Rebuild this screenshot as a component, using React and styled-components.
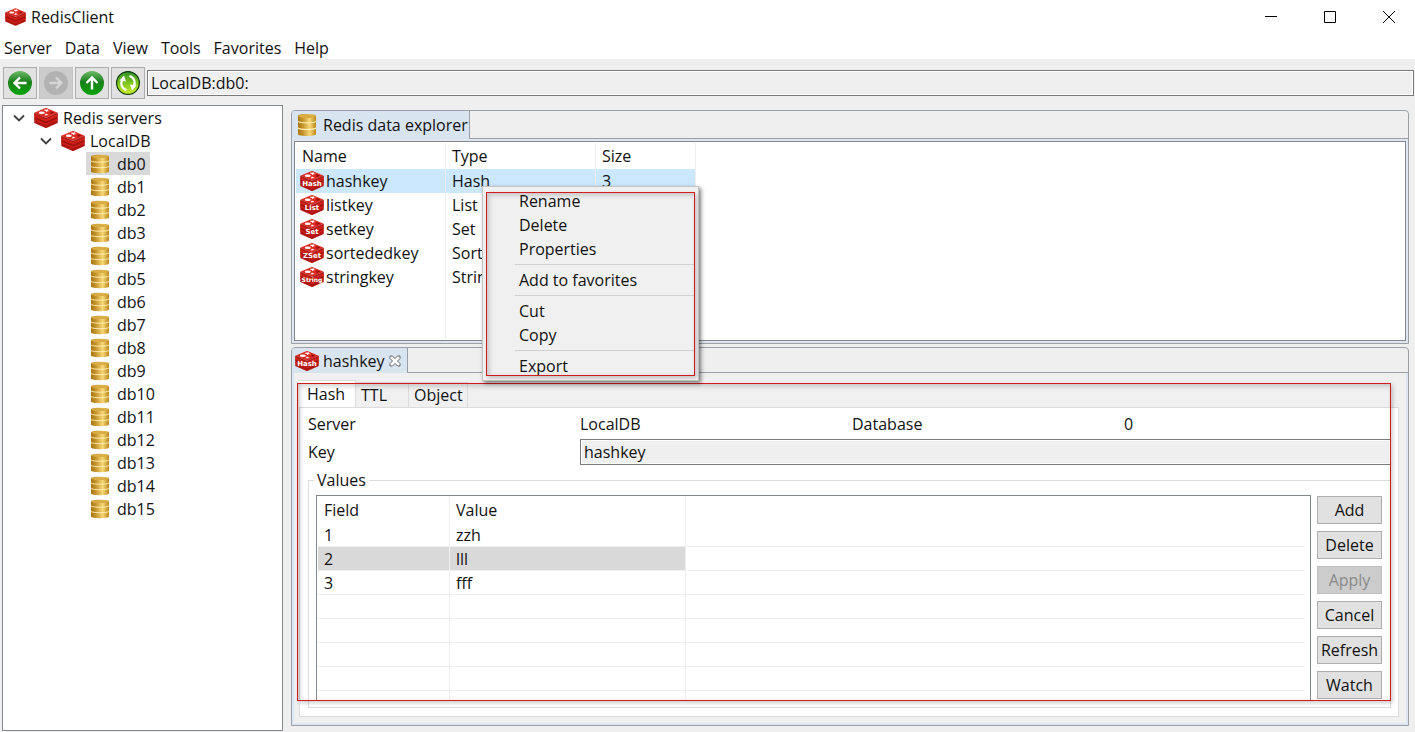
import React from "react";
import styled, { createGlobalStyle, css } from "styled-components";

const GlobalStyle = createGlobalStyle`
  * {
    box-sizing: border-box;
  }
  body {
    margin: 0;
    background-color: #efefef;
    color: #111;
    font-family: "Open Sans", "Noto Sans", sans-serif;
    font-size: 16px;
    line-height: 20px;
  }
  button, input {
    font: inherit;
    color: inherit;
  }
`;

const WINDOW = styled.div`
  display: flex;
  flex-direction: column;
  height: 100vh;
  overflow: hidden;
`;
const TITLE_BAR = styled.header`
  display: flex;
  align-items: center;
  justify-content: space-between;
  height: 36px;
  padding: 0 0 2px 5px;
  background-color: #fff;
`;
const TITLE_GROUP = styled.div`
  display: flex;
  align-items: center;
  gap: 5px;
`;
const WINDOW_BUTTON_GROUP = styled.div`
  display: flex;
`;
const WINDOW_BUTTON = styled.button`
  display: flex;
  align-items: center;
  justify-content: flex-end;
  width: 59px;
  height: 34px;
  padding: 0 20px 0 0;
  border: none;
  background: none;
`;
const MENU_BAR = styled.nav`
  display: flex;
  gap: 13px;
  height: 23px;
  padding: 2px 4px 0;
  background-color: #fff;
`;
const MENU_BAR_ITEM = styled.a`
  color: inherit;
  text-decoration: none;
`;
const TOOL_BAR = styled.div`
  display: flex;
  align-items: center;
  gap: 2px;
  padding: 8px 1px 6px 3px;
`;
const TOOL_BUTTON = styled.button`
  display: flex;
  align-items: center;
  justify-content: center;
  flex: none;
  width: 34px;
  height: 32px;
  padding: 0;
  border: 1px solid ${(props) => (props.disabled ? "#c4c4c4" : "#adadad")};
  background-color: ${(props) => (props.disabled ? "#ccc" : "#e1e1e1")};
`;
const READONLY_INPUT = styled.input`
  flex: 1;
  min-width: 0;
  width: 100%;
  height: 26px;
  padding: 0 3px;
  border: 1px solid #7a7a7a;
  background-color: #efefef;
  box-shadow: inset 0 0 0 1px #fff;
  outline: none;
`;

const BODY = styled.main`
  display: flex;
  flex: 1;
  gap: 8px;
  min-height: 0;
  padding: 0 6px 1px 2px;
`;
const TREE = styled.ul`
  flex: none;
  width: 20%;
  max-width: 281px;
  margin: 0;
  padding: 0 0 0 2px;
  list-style: none;
  overflow: hidden;
  border: 1px solid #828790;
  background-color: #fff;
`;
const TREE_ROW = styled.li`
  display: flex;
  align-items: center;
  height: 23px;
  padding-left: ${(props) => props.$level * 27}px;
`;
const TREE_ARROW = styled.span`
  display: flex;
  align-items: center;
  width: 29px;
  padding-left: 8px;
`;
const TREE_LABEL = styled.span`
  display: flex;
  align-items: center;
  gap: ${(props) => (props.$leaf ? 7 : 5)}px;
  height: 23px;
  padding: ${(props) => (props.$leaf ? "0 4px" : "0")};
  background-color: ${(props) => (props.$selected ? "#d9d9d9" : "transparent")};
`;

const WORKSPACE = styled.div`
  position: relative;
  display: flex;
  flex-direction: column;
  flex: 1;
  gap: 3px;
  min-width: 0;
  padding: 5px 0;
`;
const PANEL = styled.section`
  display: flex;
  flex-direction: column;
  flex: ${(props) => (props.$grow ? "1" : "0 0 234px")};
  min-height: 0;
  border: 1px solid #9a9fa8;
  border-radius: 4px 4px 0 0;
`;
const PANEL_STRIP = styled.div`
  display: flex;
  flex: none;
  height: ${(props) => props.$height}px;
`;
const PANEL_TAB = styled.h2`
  display: flex;
  align-items: center;
  gap: 4px;
  margin: 0;
  padding: 0 1px 0 3px;
  border-right: 1px solid #9a9fa8;
  border-top-left-radius: 3px;
  background-color: #d9e4f1;
  font-size: 16px;
  font-weight: 400;
`;
const PANEL_TAB_ICON = styled.span`
  display: flex;
  justify-content: center;
  width: 24px;
`;
const PANEL_STRIP_REST = styled.div`
  flex: 1;
  border-bottom: 1px solid #9a9fa8;
`;
const CLOSE_BUTTON = styled.button`
  display: flex;
  padding: 0 5px 0 0;
  border: none;
  background: none;
`;
const EXPLORER_FRAME = styled.div`
  flex: 1;
  padding: 2px;
  background-color: #dfe6f0;
`;
const EXPLORER_LIST = styled.div`
  height: 100%;
  padding: 1px;
  border: 1px solid #828790;
  background-color: #fff;
`;

const tableBase = css`
  table-layout: fixed;
  border-collapse: separate;
  border-spacing: 0;
`;
const cellBase = css`
  padding: 0 0 0 6px;
  text-align: left;
  font-weight: 400;
`;
const KEY_TABLE = styled.table`
  ${tableBase}
  width: 400px;
  height: 196px;
  th,
  td {
    ${cellBase}
    border-right: 1px solid #ededed;
  }
  th {
    height: 26px;
  }
`;
const KEY_ROW = styled.tr`
  height: 24px;
  background-color: ${(props) => (props.$selected ? "#cce8ff" : "#fff")};
`;
const KEY_NAME = styled.div`
  display: flex;
  align-items: center;
  gap: 2px;
  margin-left: -2px;
`;

const EDITOR_FRAME = styled.div`
  position: relative;
  display: flex;
  flex-direction: column;
  flex: 1;
  min-height: 0;
  padding: 7px 7px 6px 5px;
  border: 2px solid #dce5f1;
  border-width: 0 2px 2px;
  background-color: #f0f0f0;
`;
const FOLDER_TABS = styled.div`
  display: flex;
  align-items: flex-end;
  flex: none;
  height: 27px;
`;
const FOLDER_TAB = styled.button`
  width: ${(props) => props.$width}px;
  height: ${(props) => (props.$active ? 27 : 25)}px;
  padding: ${(props) => (props.$active ? "0 8px 1px" : "0 5px")};
  text-align: left;
  border: 1px solid #dcdcdc;
  border-width: 1px 1px 0 0;
  background-color: ${(props) => (props.$active ? "#fff" : "#f0f0f0")};
`;
const FOLDER_PAGE = styled.div`
  display: flex;
  flex-direction: column;
  flex: 1;
  min-height: 0;
  padding: 3px 7px 8px 8px;
  border: 1px solid #dcdcdc;
  background-color: #fff;
`;
const INFO_GRID = styled.div`
  display: grid;
  grid-template-columns: repeat(4, 1fr);
  column-gap: 5px;
  row-gap: 2px;
  grid-auto-rows: 26px;
  align-items: center;
`;
const KEY_FIELD = styled.div`
  display: flex;
  grid-column: span 3;
`;
const VALUES_GROUP = styled.fieldset`
  display: flex;
  flex: 1;
  gap: 6px;
  min-width: 0;
  min-height: 0;
  margin: 5px 0 0;
  padding: 5px 8px 6px 7px;
  border: 1px solid #dcdcdc;
  legend {
    margin-left: -2px;
    padding: 0 3px;
  }
`;
const VALUES_LIST = styled.div`
  flex: 1;
  min-width: 0;
  overflow: hidden;
  padding: 1px 5px 0 1px;
  border: 1px solid #828790;
  background-color: #fff;
`;
const VALUES_TABLE = styled.table`
  ${tableBase}
  width: 100%;
  th,
  td {
    ${cellBase}
    height: 24px;
    border: 1px solid #efefef;
    border-width: 0 1px 1px 0;
  }
  th {
    height: 26px;
    border-bottom: none;
  }
  th:last-child,
  td:last-child {
    border-right: none;
  }
`;
const VALUE_ROW = styled.tr`
  td:not(:last-child) {
    background-color: ${(props) => (props.$selected ? "#d9d9d9" : "#fff")};
  }
`;
const ACTION_GROUP = styled.div`
  display: flex;
  flex-direction: column;
  gap: 7px;
  flex: none;
  width: 65px;
  padding-top: 1px;
`;
const ACTION_BUTTON = styled.button`
  flex: none;
  height: 28px;
  padding: 0;
  border: 1px solid #adadad;
  background-color: #e1e1e1;
  &:disabled {
    border-color: #bfbfbf;
    background-color: #ccc;
    color: #8a8a8a;
  }
`;

const MARK = styled.div`
  position: absolute;
  inset: ${(props) => props.$inset};
  border: 1px solid #d01c1c;
  box-shadow: 2px 2px 4px rgba(0, 0, 0, 0.2),
    inset 2px 2px 5px rgba(0, 0, 0, 0.2);
  pointer-events: none;
`;
const CONTEXT_MENU = styled.ul`
  position: absolute;
  top: 81px;
  left: 191px;
  width: 217px;
  margin: 0;
  padding: 2px 4px 2px 32px;
  list-style: none;
  border: 1px solid #c4c4c4;
  background-color: #f0f0f0;
  box-shadow: 2px 2px 4px rgba(0, 0, 0, 0.5);
`;
const CONTEXT_MENU_ITEM = styled.li`
  display: flex;
  button {
    flex: 1;
    height: 24px;
    padding: 0 4px;
    text-align: left;
    border: none;
    background: none;
  }
`;
const CONTEXT_MENU_LINE = styled.li`
  height: 1px;
  margin: 3px 0;
  background-color: #d0d0d0;
`;

const RedisIcon = ({ label, size = 24 }) => (
  <svg
    width={size}
    height={Math.round((size * 5) / 6)}
    viewBox="0 0 24 20"
    overflow="visible"
  >
    <path
      d="M.3 5 11 9.800Q12 10.200 13 9.800L23.700 5V15L13 19.700Q12 20.200 11 19.700L.3 15Z"
      fill="#b01510"
    />
    <path d="M.3 5.800 12 11 23.700 5.800V8.800L12 13.600.3 8.800Z" fill="#d0201a" />
    <path d="M.3 10.400 12 15.400 23.700 10.400V12.200L12 17.200.3 12.200Z" fill="#cb1d18" />
    <path d="M.3 4.800 11 .3Q12-.1 13 .3L23.700 4.800 13 9.400Q12 9.900 11 9.400Z" fill="#dc2a22" />
    <path
      d="M.3 9.600 12 14.600 23.700 9.600M.3 5.200 12 10.400 23.700 5.200"
      fill="none"
      stroke="#8e110c"
      strokeWidth="0.700"
    />
    <path d="m10 1.300 2 .5 2-.8-.3 1.200 2 .7-2.400.3-.8 1-.7-1.200-2.200-.4 1.300-.5Z" fill="#fff" />
    <ellipse cx="7.800" cy="4.800" rx="3" ry="1.200" fill="#fff" />
    <path d="m10.500 7.600 4.200-.7-2.800-1.400Z" fill="#fff" />
    <path d="m16.500 3.300 3.600 1.400L16.500 6Z" fill="#8e110c" />
    {label && (
      <text
        x="12"
        y="15"
        textAnchor="middle"
        fill="#fff"
        fontFamily="DejaVu Sans, sans-serif"
        fontWeight="700"
        fontSize={label.length > 4 ? 6 : 7}
      >
        {label}
      </text>
    )}
  </svg>
);

const DatabaseIcon = ({ height = 20 }) => (
  <svg width="20" height={height} viewBox="0 0 20 20" preserveAspectRatio="none">
    <defs>
      <linearGradient id="gold">
        <stop offset="0" stopColor="#a87612" />
        <stop offset="0.25" stopColor="#c4922a" />
        <stop offset="0.65" stopColor="#f7d777" />
        <stop offset="1" stopColor="#b98719" />
      </linearGradient>
    </defs>
    <path
      d="M1 2.500C1 .2 19 .2 19 2.500V17.500C19 19.800 1 19.800 1 17.500Z"
      fill="url(#gold)"
    />
    <ellipse cx="10" cy="2.600" rx="8.500" ry="1.500" fill="#d9ad45" />
    <path
      d="M1 7C3 8.600 17 8.600 19 7M1 12.500C3 14.100 17 14.100 19 12.500"
      fill="none"
      stroke="#fff0b8"
      strokeWidth="0.900"
    />
  </svg>
);

const ARROWS = {
  back: "M19.500 13H8M13 7.500 7.500 13l5.500 5.500",
  forward: "M6.500 13H18M13 7.500l5.500 5.500-5.500 5.500",
  up: "M13 19.500V8M7.500 13 13 7.500l5.500 5.500",
};

const ArrowIcon = ({ type, disabled }) => (
  <svg width="26" height="26" viewBox="0 0 26 26">
    <defs>
      <linearGradient id="green" x2="0" y2="1">
        <stop offset="0" stopColor="#6dba68" />
        <stop offset="0.45" stopColor="#1a7f1a" />
        <stop offset="1" stopColor="#0ba60b" />
      </linearGradient>
    </defs>
    <circle cx="13" cy="13" r="12" fill={disabled ? "#b2b2b2" : "url(#green)"} />
    <path
      d={ARROWS[type]}
      fill="none"
      stroke={disabled ? "#d6d6d6" : "#fff"}
      strokeWidth="2.400"
    />
  </svg>
);

const RefreshIcon = () => (
  <svg width="26" height="26" viewBox="0 0 26 26">
    <defs>
      <linearGradient id="lime" x2="0" y2="1">
        <stop offset="0" stopColor="#2f8f2a" />
        <stop offset="0.5" stopColor="#7cc61c" />
        <stop offset="1" stopColor="#d2ee2a" />
      </linearGradient>
    </defs>
    <circle cx="13" cy="13" r="11.400" fill="url(#lime)" stroke="#0c3a10" strokeWidth="1.200" />
    <path
      d="M11.500 20C6.500 18.500 5 13.500 7.500 9.500M14.500 6C19.500 7.500 21 12.500 18.500 16.500"
      fill="none"
      stroke="#fff"
      strokeWidth="2.200"
    />
    <path d="M4.500 10.500 9 5.500l2 6ZM21.500 15.500 17 20.500l-2-6Z" fill="#fff" />
  </svg>
);

const ChevronIcon = () => (
  <svg width="12" height="8" viewBox="0 0 12 8">
    <path d="m1 1.500 5 5 5-5" fill="none" stroke="#404040" strokeWidth="1.800" />
  </svg>
);

const menus = ["Server", "Data", "View", "Tools", "Favorites", "Help"];
const databases = Array.from({ length: 16 }, (_, i) => `db${i}`);
const keys = [
  { name: "hashkey", type: "Hash", size: "3", label: "Hash" },
  { name: "listkey", type: "List", size: "", label: "List" },
  { name: "setkey", type: "Set", size: "", label: "Set" },
  { name: "sortededkey", type: "Sorted Set", size: "", label: "ZSet" },
  { name: "stringkey", type: "String", size: "", label: "String" },
];
const values = [
  ["1", "zzh"],
  ["2", "lll"],
  ["3", "fff"],
  ["", ""],
  ["", ""],
  ["", ""],
  ["", ""],
  ["", ""],
];
const actions = ["Add", "Delete", "Apply", "Cancel", "Refresh", "Watch"];
const contextMenu = [
  ["Rename", "Delete", "Properties"],
  ["Add to favorites"],
  ["Cut", "Copy"],
  ["Export"],
];

const TitleBar = () => (
  <TITLE_BAR>
    <TITLE_GROUP>
      <RedisIcon size={21} />
      RedisClient
    </TITLE_GROUP>
    <WINDOW_BUTTON_GROUP>
      <WINDOW_BUTTON aria-label="Minimize">
        <svg width="12" height="12">
          <path d="M0 5.500h12" stroke="#000" />
        </svg>
      </WINDOW_BUTTON>
      <WINDOW_BUTTON aria-label="Maximize">
        <svg width="12" height="12">
          <path d="M.5.5h11v11H.5Z" fill="none" stroke="#000" />
        </svg>
      </WINDOW_BUTTON>
      <WINDOW_BUTTON aria-label="Close">
        <svg width="12" height="12">
          <path d="m0 0 12 12M12 0 0 12" stroke="#000" />
        </svg>
      </WINDOW_BUTTON>
    </WINDOW_BUTTON_GROUP>
  </TITLE_BAR>
);

const ServerTree = () => (
  <TREE>
    {["Redis servers", "LocalDB"].map((name, level) => (
      <TREE_ROW key={name} $level={level}>
        <TREE_ARROW>
          <ChevronIcon />
        </TREE_ARROW>
        <TREE_LABEL>
          <RedisIcon />
          {name}
        </TREE_LABEL>
      </TREE_ROW>
    ))}
    {databases.map((name) => (
      <TREE_ROW key={name} $level={3}>
        <TREE_LABEL $leaf $selected={name === "db0"}>
          <DatabaseIcon />
          {name}
        </TREE_LABEL>
      </TREE_ROW>
    ))}
  </TREE>
);

const DataExplorer = () => (
  <PANEL>
    <PANEL_STRIP $height={28}>
      <PANEL_TAB>
        <PANEL_TAB_ICON>
          <DatabaseIcon height={24} />
        </PANEL_TAB_ICON>
        Redis data explorer
      </PANEL_TAB>
      <PANEL_STRIP_REST />
    </PANEL_STRIP>
    <EXPLORER_FRAME>
      <EXPLORER_LIST>
        <KEY_TABLE>
          <colgroup>
            <col width="150" />
            <col width="150" />
            <col width="100" />
          </colgroup>
          <thead>
            <tr>
              <th>Name</th>
              <th>Type</th>
              <th>Size</th>
            </tr>
          </thead>
          <tbody>
            {keys.map((value) => (
              <KEY_ROW key={value.name} $selected={value.name === "hashkey"}>
                <td>
                  <KEY_NAME>
                    <RedisIcon label={value.label} />
                    {value.name}
                  </KEY_NAME>
                </td>
                <td>{value.type}</td>
                <td>{value.size}</td>
              </KEY_ROW>
            ))}
            <tr>
              <td />
              <td />
              <td />
            </tr>
          </tbody>
        </KEY_TABLE>
      </EXPLORER_LIST>
    </EXPLORER_FRAME>
  </PANEL>
);

const KeyEditor = () => (
  <PANEL $grow>
    <PANEL_STRIP $height={25}>
      <PANEL_TAB>
        <PANEL_TAB_ICON>
          <RedisIcon label="Hash" />
        </PANEL_TAB_ICON>
        hashkey
        <CLOSE_BUTTON aria-label="Close tab">
          <svg width="12" height="12" viewBox="0 0 12 12">
            <path
              d="M1 1h2.500L6 3.500 8.500 1H11v2.500L8.500 6 11 8.500V11H8.500L6 8.500 3.500 11H1V8.500L3.500 6 1 3.500Z"
              fill="#fff"
              stroke="#666"
            />
          </svg>
        </CLOSE_BUTTON>
      </PANEL_TAB>
      <PANEL_STRIP_REST />
    </PANEL_STRIP>
    <EDITOR_FRAME>
      <FOLDER_TABS>
        <FOLDER_TAB $active $width={57}>
          Hash
        </FOLDER_TAB>
        <FOLDER_TAB $width={53}>TTL</FOLDER_TAB>
        <FOLDER_TAB $width={59}>Object</FOLDER_TAB>
      </FOLDER_TABS>
      <FOLDER_PAGE>
        <INFO_GRID>
          <span>Server</span>
          <span>LocalDB</span>
          <span>Database</span>
          <span>0</span>
          <label htmlFor="key">Key</label>
          <KEY_FIELD>
            <READONLY_INPUT id="key" readOnly value="hashkey" />
          </KEY_FIELD>
        </INFO_GRID>
        <VALUES_GROUP>
          <legend>Values</legend>
          <VALUES_LIST>
            <VALUES_TABLE>
              <colgroup>
                <col width="132" />
                <col width="236" />
                <col />
              </colgroup>
              <thead>
                <tr>
                  <th>Field</th>
                  <th>Value</th>
                  <th />
                </tr>
              </thead>
              <tbody>
                {values.map(([field, value], index) => (
                  <VALUE_ROW key={index} $selected={field === "2"}>
                    <td>{field}</td>
                    <td>{value}</td>
                    <td />
                  </VALUE_ROW>
                ))}
              </tbody>
            </VALUES_TABLE>
          </VALUES_LIST>
          <ACTION_GROUP>
            {actions.map((name) => (
              <ACTION_BUTTON key={name} disabled={name === "Apply"}>
                {name}
              </ACTION_BUTTON>
            ))}
          </ACTION_GROUP>
        </VALUES_GROUP>
      </FOLDER_PAGE>
      <MARK $inset="10px 15px 22px 3px" />
    </EDITOR_FRAME>
  </PANEL>
);

const ContextMenu = () => (
  <CONTEXT_MENU>
    {contextMenu.map((group, index) => (
      <React.Fragment key={index}>
        {index > 0 && <CONTEXT_MENU_LINE />}
        {group.map((name) => (
          <CONTEXT_MENU_ITEM key={name}>
            <button>{name}</button>
          </CONTEXT_MENU_ITEM>
        ))}
      </React.Fragment>
    ))}
    <MARK $inset="5px 3px 4px 3px" />
  </CONTEXT_MENU>
);

const App = () => {
  return (
    <WINDOW>
      <GlobalStyle />
      <TitleBar />
      <MENU_BAR>
        {menus.map((name) => (
          <MENU_BAR_ITEM key={name} href="#">
            {name}
          </MENU_BAR_ITEM>
        ))}
      </MENU_BAR>
      <TOOL_BAR>
        <TOOL_BUTTON aria-label="Back">
          <ArrowIcon type="back" />
        </TOOL_BUTTON>
        <TOOL_BUTTON aria-label="Forward" disabled>
          <ArrowIcon type="forward" disabled />
        </TOOL_BUTTON>
        <TOOL_BUTTON aria-label="Up">
          <ArrowIcon type="up" />
        </TOOL_BUTTON>
        <TOOL_BUTTON aria-label="Refresh">
          <RefreshIcon />
        </TOOL_BUTTON>
        <READONLY_INPUT aria-label="Location" readOnly value="LocalDB:db0:" />
      </TOOL_BAR>
      <BODY>
        <ServerTree />
        <WORKSPACE>
          <DataExplorer />
          <KeyEditor />
          <ContextMenu />
        </WORKSPACE>
      </BODY>
    </WINDOW>
  );
};

export default App;
